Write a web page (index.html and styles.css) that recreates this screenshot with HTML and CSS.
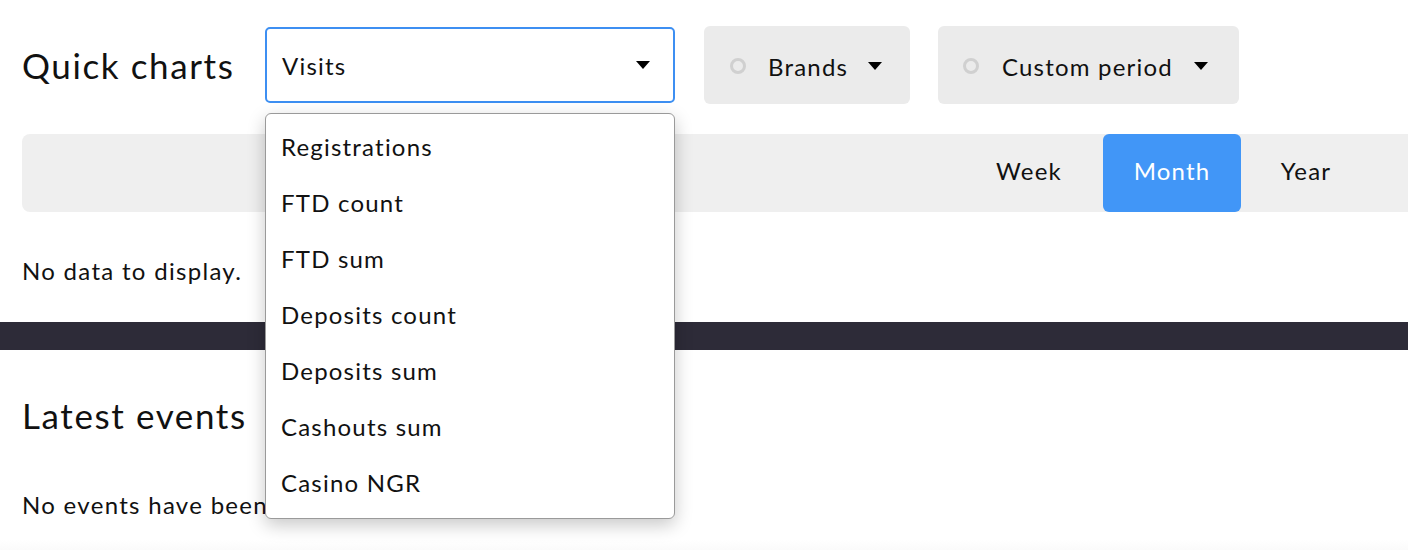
FILE: index.html
```html
<!DOCTYPE html>
<html lang="en">
<head>
<meta charset="utf-8">
<title>Quick charts</title>
<link rel="stylesheet" href="styles.css">
</head>
<body>
<div class="page">
  <section class="charts">
    <div class="toolbar">
      <h2 class="title">Quick charts</h2>
      <div class="select-wrap">
        <div class="select">
          <span>Visits</span>
          <span class="caret"></span>
        </div>
        <ul class="menu">
          <li>Registrations</li>
          <li>FTD count</li>
          <li>FTD sum</li>
          <li>Deposits count</li>
          <li>Deposits sum</li>
          <li>Cashouts sum</li>
          <li>Casino NGR</li>
        </ul>
      </div>
      <div class="filter brands">
        <span class="ring"></span>
        <span class="label">Brands</span>
        <span class="caret"></span>
      </div>
      <div class="filter period">
        <span class="ring"></span>
        <span class="label">Custom period</span>
        <span class="caret"></span>
      </div>
    </div>
    <div class="range-bar">
      <div class="tab tab-week">Week</div>
      <div class="tab tab-month active">Month</div>
      <div class="tab tab-year">Year</div>
    </div>
    <p class="empty">No data to display.</p>
  </section>
  <div class="divider"></div>
  <section class="events">
    <h2 class="title">Latest events</h2>
    <p class="empty events-empty">No events have been recorded yet.</p>
  </section>
  <div class="footer-fade"></div>
</div>
</body>
</html>
```

FILE: styles.css
```css
* { box-sizing: border-box; }
html, body { margin: 0; padding: 0; }
body {
  font-family: Lato, "Noto Sans", sans-serif;
  color: #111;
  background: #fff;
  overflow: hidden;
}
.page { width: 1408px; }

.charts { padding-left: 22px; }

.toolbar {
  display: flex;
  align-items: center;
  padding-top: 26px;
  height: 104px;
}
.title {
  margin: 0;
  width: 212px;
  font-size: 35px;
  font-weight: 400;
  line-height: 40px;
  letter-spacing: 1.6px;
  white-space: nowrap;
}
.select-wrap {
  position: relative;
  margin-left: 31px;
  width: 410px;
  flex: none;
}
.select {
  height: 76px;
  border: 2px solid #3d8ff2;
  border-radius: 5px;
  display: flex;
  align-items: center;
  justify-content: space-between;
  padding: 0 23px 0 15px;
  font-size: 24px;
  letter-spacing: 1.2px;
}
.caret {
  width: 0;
  height: 0;
  border-left: 7px solid transparent;
  border-right: 7px solid transparent;
  border-top: 8px solid #000;
  flex: none;
}
.menu {
  position: absolute;
  left: 0;
  top: 86px;
  width: 410px;
  margin: 0;
  padding: 5px 0 7px;
  list-style: none;
  background: #fff;
  border: 1px solid #9a9a9a;
  border-radius: 6px;
  box-shadow: 0 6px 18px rgba(0, 0, 0, 0.22);
  z-index: 10;
}
.menu li {
  height: 56px;
  line-height: 56px;
  padding-left: 15px;
  font-size: 24px;
  letter-spacing: 1.2px;
}

.filter {
  height: 78px;
  background: #ebebeb;
  border-radius: 6px;
  display: flex;
  align-items: center;
  padding-top: 2px;
  font-size: 24px;
  letter-spacing: 1.2px;
  flex: none;
}
.brands { margin-left: 29px; width: 206px; padding-left: 26px; }
.period { margin-left: 28px; width: 301px; padding-left: 25px; }
.ring {
  width: 16px;
  height: 16px;
  border: 3px solid #d0d0d0;
  border-radius: 50%;
  flex: none;
}
.filter .label { margin-left: 22px; margin-right: 20px; white-space: nowrap; }
.period .label { margin-left: 23px; margin-right: 21px; }

.range-bar {
  margin-top: 30px;
  height: 78px;
  background: #efefef;
  border-radius: 8px 0 0 8px;
  display: flex;
  justify-content: flex-end;
  padding-right: 37px;
}
.tab {
  display: flex;
  align-items: center;
  justify-content: center;
  padding-bottom: 5px;
  font-size: 24px;
  letter-spacing: 1.2px;
}
.tab-week { width: 148px; }
.tab.active {
  width: 138px;
  background: #4196f7;
  color: #fff;
  border-radius: 6px;
}
.tab-year { width: 130px; }

.empty {
  margin: 44px 0 0;
  font-size: 24px;
  line-height: 30px;
  letter-spacing: 1.3px;
}

.divider {
  margin-top: 36px;
  height: 28px;
  background: #2d2b38;
}

.events { padding-left: 22px; padding-top: 45px; }
.events-empty { margin-top: 55px; }

.footer-fade {
  margin-top: 20px;
  height: 20px;
  background: linear-gradient(#fff, #f6f6f6);
}
```
